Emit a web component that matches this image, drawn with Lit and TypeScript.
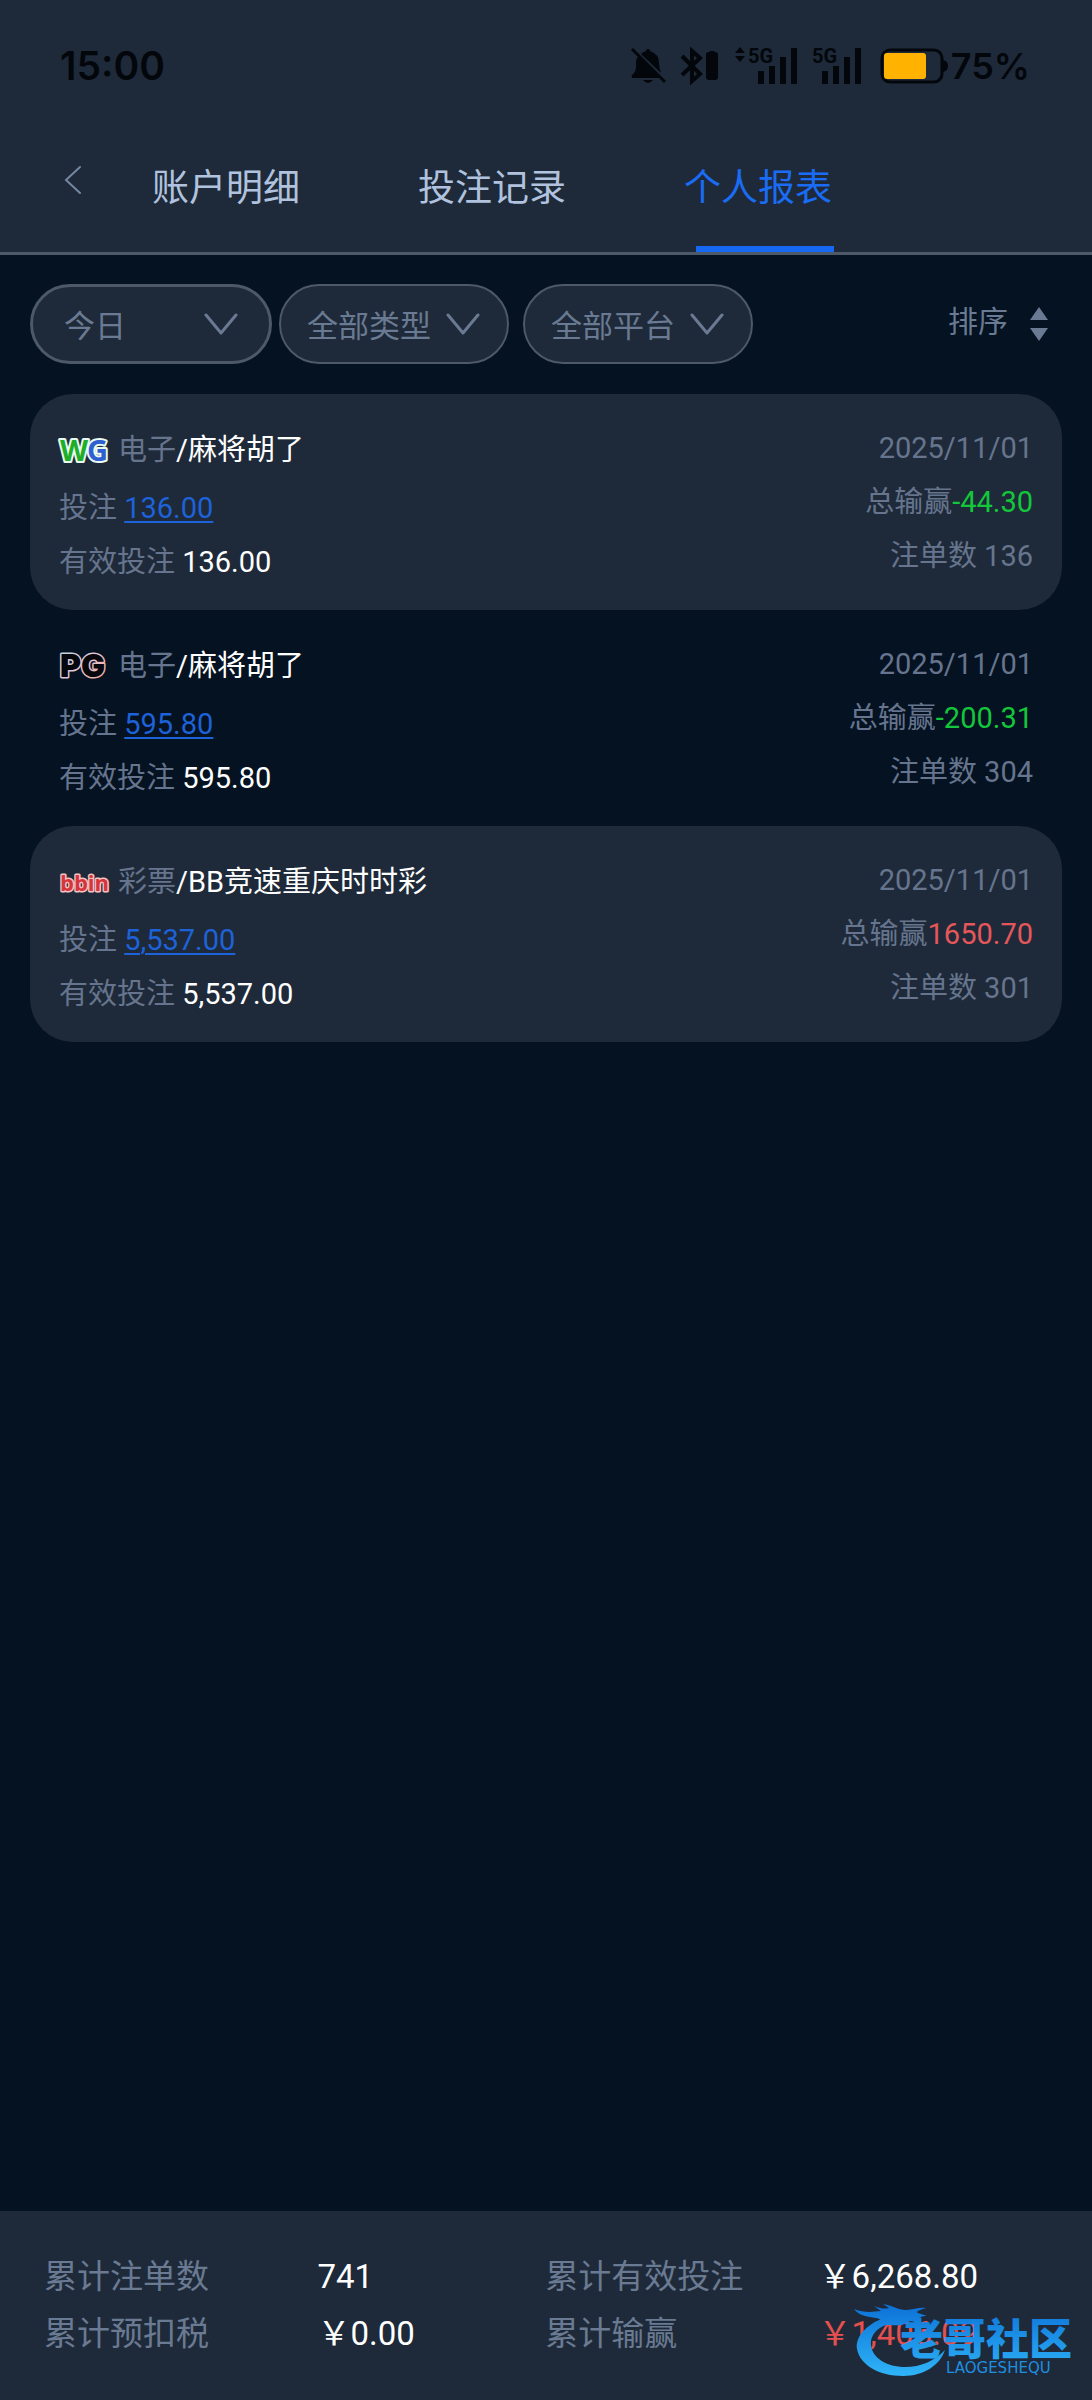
import { LitElement, html, css, svg, nothing } from "lit";
import { customElement, property, state } from "lit/decorators.js";
import { classMap } from "lit/directives/class-map.js";

type Brand = "wg" | "pg" | "bbin";

interface Report {
  brand: Brand;
  category: string;
  game: string;
  bet: string;
  validBet: string;
  date: string;
  result: string;
  count: number;
}

const REPORTS: Report[] = [
  { brand: "wg", category: "电子", game: "麻将胡了", bet: "136.00", validBet: "136.00", date: "2025/11/01", result: "-44.30", count: 136 },
  { brand: "pg", category: "电子", game: "麻将胡了", bet: "595.80", validBet: "595.80", date: "2025/11/01", result: "-200.31", count: 304 },
  { brand: "bbin", category: "彩票", game: "BB竞速重庆时时彩", bet: "5,537.00", validBet: "5,537.00", date: "2025/11/01", result: "1650.70", count: 301 },
];

const TABS = ["账户明细", "投注记录", "个人报表"];

@customElement("status-bar")
class StatusBar extends LitElement {
  static styles = css`
    :host {
      display: flex;
      align-items: center;
      justify-content: space-between;
      height: 131px;
      padding: 0 62px 0 60px;
      box-sizing: border-box;
      color: #03070c;
      font-family: Inter, Roboto, sans-serif;
      font-weight: 600;
    }
    .clock { font-size: 39px; line-height: 48px; }
    .icons { display: flex; align-items: center; }
    .bell { margin-right: 14px; }
    .bluetooth { margin-right: 17px; }
    .signal { margin-right: 14px; }
    .battery { margin: 0 3px 0 4px; }
    .percent { font-size: 36px; line-height: 48px; }
    svg { display: block; fill: currentColor; overflow: visible; }
    .net { font: 700 20px Roboto, sans-serif; }
  `;

  private bars(x: number) {
    return svg`
      <rect x=${x} y="24" width="6" height="13"></rect>
      <rect x=${x + 11} y="19" width="6" height="18"></rect>
      <rect x=${x + 22} y="10" width="6" height="27"></rect>
      <rect x=${x + 33} y="1" width="6" height="36"></rect>`;
  }

  render() {
    return html`
      <span class="clock">15:00</span>
      <div class="icons">
        <svg class="bell" width="37" height="38" viewBox="0 0 37 38" aria-hidden="true">
          <path d="M9 9 L30 31 H2 C1 29 2 28 4 26 C7 22 6 18 6 15 C6 12 7 11 9 9Z"></path>
          <path d="M11 7 Q13 5 16 4 Q16 2 18 2 Q20 2 20 4 Q29 7 29 16 Q29 20 31 26Z"></path>
          <path d="M13 33 H23 Q21 36 18 36 Q15 36 13 33Z"></path>
          <path d="M2 2 L35 35" stroke="currentColor" stroke-width="3"></path>
        </svg>
        <svg class="bluetooth" width="37" height="38" viewBox="0 0 37 38" aria-hidden="true">
          <path d="M1 9 L19 27 L11 34 V4 L19 11 L1 28" fill="none" stroke="currentColor" stroke-width="4"></path>
          <path d="M25 7 Q25 5 28 5 Q28 4 31 4 Q34 4 34 5 Q37 5 37 8 V30 Q37 33 34 33 H28 Q25 33 25 30Z"></path>
        </svg>
        <svg class="signal" width="63" height="38" viewBox="0 0 63 38" aria-hidden="true">
          <path d="M0 6 L5 0 L10 6Z M0 9 H10 L5 15Z"></path>
          <text class="net" x="13" y="16">5G</text>
          ${this.bars(23)}
        </svg>
        <svg class="signal" width="50" height="38" viewBox="0 0 50 38" aria-hidden="true">
          <text class="net" x="0" y="16">5G</text>
          ${this.bars(10)}
        </svg>
        <svg class="battery" width="68" height="36" viewBox="0 0 68 36" aria-hidden="true">
          <rect x="2" y="2" width="60" height="32" rx="8" fill="none" stroke="currentColor" stroke-width="3"></rect>
          <rect x="4" y="5" width="42" height="26" rx="3" fill="#ffb300"></rect>
          <path d="M63 12 Q68 13 68 18 Q68 23 63 24Z"></path>
        </svg>
        <span class="percent">75%</span>
      </div>
    `;
  }
}

@customElement("brand-mark")
class BrandMark extends LitElement {
  @property() brand: Brand = "wg";

  static styles = css`
    :host { display: block; width: 51px; height: 30px; }
    svg { display: block; overflow: visible; }
    text { paint-order: stroke; stroke-linejoin: round; }
    .wg { font: 700 29px "Open Sans", sans-serif; stroke: #e9fbf0; stroke-width: 4px; }
    .green { fill: #1fae2a; }
    .blue { fill: #2f5fd0; }
    .pg { font: 900 32px Inter, sans-serif; fill: #05070d; stroke-width: 3px; stroke: url(#edge); }
    .bbin { font: 700 22px "Open Sans", sans-serif; fill: #d8353b; stroke: #f3c3c4; stroke-width: 3px; }
  `;

  render() {
    return html`
      <svg width="51" height="30" viewBox="0 0 51 30" role="img" aria-label=${this.brand}>
        ${this.brand === "wg"
          ? svg`<text class="wg green" x="1" y="26">W</text><text class="wg blue" x="28" y="26">G</text>`
          : nothing}
        ${this.brand === "pg"
          ? svg`
            <defs>
              <linearGradient id="edge" x1="0" y1="0" x2="1" y2="1">
                <stop offset="0" stop-color="#b9d4e6"></stop>
                <stop offset="0.5" stop-color="#e6c4d2"></stop>
                <stop offset="1" stop-color="#f0a58a"></stop>
              </linearGradient>
            </defs>
            <text class="pg" x="1" y="26">PG</text>`
          : nothing}
        ${this.brand === "bbin" ? svg`<text class="bbin" x="1" y="24">bbin</text>` : nothing}
      </svg>
    `;
  }
}

@customElement("filter-select")
class FilterSelect extends LitElement {
  @property() label = "";
  @property({ attribute: false }) options: string[] = [];

  static styles = css`
    :host { display: grid; height: 80px; }
    select, svg { grid-area: 1 / 1; }
    select {
      appearance: none;
      width: 100%;
      height: 100%;
      box-sizing: border-box;
      margin: 0;
      padding: 4px 60px 0 var(--inset, 26px);
      border: var(--edge, 2px) solid #4d5869;
      border-radius: 40px;
      background: #1e2a39;
      color: #6a7a92;
      font: inherit;
      outline: none;
    }
    svg {
      align-self: center;
      justify-self: end;
      margin-right: calc(var(--inset, 26px) + 3px);
      pointer-events: none;
      fill: none;
      stroke: #6a7a92;
      stroke-width: 3;
      stroke-linecap: round;
      stroke-linejoin: round;
    }
  `;

  render() {
    return html`
      <select aria-label=${this.label}>
        ${this.options.map((o) => html`<option>${o}</option>`)}
      </select>
      <svg width="34" height="22" viewBox="0 0 34 22" aria-hidden="true"><path d="M2 2 L17 20 L32 2"></path></svg>
    `;
  }
}

@customElement("report-card")
class ReportCard extends LitElement {
  @property({ attribute: false }) report!: Report;

  static styles = css`
    :host {
      display: flex;
      justify-content: space-between;
      height: 216px;
      box-sizing: border-box;
      padding: 32px 29px 0;
      border-radius: 43px;
      font-size: 29px;
      color: #66758d;
    }
    .left, .right { display: flex; flex-direction: column; gap: 14px; }
    .right { padding-top: 2px; align-items: flex-end; }
    .line { line-height: 40px; white-space: nowrap; }
    .left .title { display: flex; align-items: center; gap: 8px; line-height: 48px; }
    .strong { color: #fff; }
    a { color: #1d62d8; text-underline-offset: 3px; text-decoration-thickness: 2px; }
    .win { color: #e5575a; }
    .loss { color: #14c63a; }
  `;

  render() {
    const r = this.report;
    const loss = r.result.startsWith("-");
    return html`
      <div class="left">
        <div class="line title">
          <brand-mark .brand=${r.brand}></brand-mark>
          <span>${r.category}<span class="strong">/${r.game}</span></span>
        </div>
        <div class="line">投注 <a href="#bets">${r.bet}</a></div>
        <div class="line">有效投注 <span class="strong">${r.validBet}</span></div>
      </div>
      <div class="right">
        <time class="line">${r.date}</time>
        <div class="line">总输赢<span class=${classMap({ loss, win: !loss })}>${r.result}</span></div>
        <div class="line">注单数 ${r.count}</div>
      </div>
    `;
  }
}

@customElement("community-badge")
class CommunityBadge extends LitElement {
  static styles = css`
    :host { display: block; pointer-events: none; }
    svg { display: block; overflow: visible; }
    .name { font: 900 43px "Noto Sans CJK SC", sans-serif; }
    .latin { font: 400 15px "DejaVu Sans", sans-serif; fill: #1f8fe0; }
  `;

  render() {
    return html`
      <svg width="224" height="76" viewBox="0 0 224 76" role="img" aria-label="老哥社区">
        <defs>
          <linearGradient id="sky" gradientUnits="userSpaceOnUse" x1="0" y1="0" x2="0" y2="74">
            <stop offset="0" stop-color="#0b6fd6"></stop>
            <stop offset="1" stop-color="#2fb4f7"></stop>
          </linearGradient>
        </defs>
        <g fill="url(#sky)">
          <path d="M36 14 C14 20 1 34 3 47 C6 63 25 74 49 74 C70 74 86 63 91 48 C80 59 67 65 51 65 C33 65 18 56 17 43 C16 32 25 23 42 20Z"></path>
          <path d="M0 7 C10 11 18 10 27 9 L20 4 C28 7 31 7 35 6 L29 2 C40 4 44 8 52 8 C60 8 65 5 72 6 C65 8 61 10 64 11 L73 14 C62 14 64 18 68 25 C60 19 57 18 52 21 C44 26 38 21 28 24 C32 18 25 16 16 15 C9 14 4 12 0 7Z"></path>
          <text class="name" x="46" y="53">老哥社区</text>
        </g>
        <text class="latin" x="92" y="71">LAOGESHEQU</text>
      </svg>
    `;
  }
}

@customElement("app-root")
class AppRoot extends LitElement {
  @state() private active = 2;

  static styles = css`
    :host {
      display: flex;
      flex-direction: column;
      min-height: 100vh;
      background: #041222;
      color: #6a7a92;
      font-family: Roboto, "Noto Sans CJK SC", sans-serif;
      font-weight: 400;
    }
    button { margin: 0; padding: 0; border: 0; background: none; color: inherit; font: inherit; cursor: pointer; }
    .top { background: #1e2a39; border-bottom: 3px solid #4d5869; }
    .nav { display: flex; height: 121px; padding-left: 57px; }
    .back { width: 32px; height: 97px; display: grid; place-items: center; }
    .back svg { fill: none; stroke: #7486a2; stroke-width: 2; stroke-linecap: round; }
    .tabs { display: flex; gap: 118px; margin-left: 63px; }
    .tab {
      position: relative;
      padding-bottom: 13px;
      font-size: 37px;
      color: #b0c2de;
      white-space: nowrap;
    }
    .tab.active { color: #1a6cf5; }
    .tab.active::after {
      content: "";
      position: absolute;
      left: 12px;
      right: -2px;
      bottom: 0;
      height: 6px;
      background: #1668f3;
    }
    .filters { display: flex; align-items: center; gap: 7px; padding: 29px 43px 0 30px; font-size: 31px; }
    .day { --edge: 3px; --inset: 31px; flex: 0 1 242px; }
    .kind { flex: 0 1 230px; }
    .platform { flex: 0 1 230px; margin-left: 7px; }
    .sort { display: flex; align-items: center; gap: 21px; margin-left: auto; font-size: 30px; line-height: 40px; }
    .sort span { padding-bottom: 4px; }
    .sort svg { fill: #6a7a92; }
    .list { padding: 30px 30px 0; }
    .card.filled { background: #1e2a39; }
    .totals {
      position: relative;
      display: grid;
      grid-template-columns: 12fr 10fr 12fr 12fr;
      align-content: start;
      row-gap: 9px;
      box-sizing: border-box;
      height: 189px;
      margin: auto 0 0;
      padding: 42px 0 0 44px;
      background: #1e2a39;
      font-size: 33px;
      line-height: 48px;
      white-space: nowrap;
    }
    .totals dt, .totals dd { margin: 0; }
    .totals dd { color: #fff; }
    .totals .gain { color: #e5504f; }
    .badge { position: absolute; right: 14px; bottom: 22px; }
  `;

  render() {
    return html`
      <header class="top">
        <status-bar></status-bar>
        <nav class="nav">
          <button class="back" aria-label="返回">
            <svg width="18" height="28" viewBox="0 0 18 28"><path d="M16 1 L2 14 L16 27"></path></svg>
          </button>
          <div class="tabs" role="tablist">
            ${TABS.map(
              (t, i) => html`<button
                role="tab"
                aria-selected=${i === this.active}
                class=${classMap({ tab: true, active: i === this.active })}
                @click=${() => (this.active = i)}
              >${t}</button>`
            )}
          </div>
        </nav>
      </header>
      <main>
        <div class="filters">
          <filter-select class="day" label="日期" .options=${["今日"]}></filter-select>
          <filter-select class="kind" label="类型" .options=${["全部类型"]}></filter-select>
          <filter-select class="platform" label="平台" .options=${["全部平台"]}></filter-select>
          <button class="sort">
            <span>排序</span>
            <svg width="20" height="34" viewBox="0 0 20 34" aria-hidden="true"><path d="M10 0 L19 13 H1Z M1 21 H19 L10 34Z"></path></svg>
          </button>
        </div>
        <section class="list">
          ${REPORTS.map(
            (r, i) => html`<report-card class=${classMap({ card: true, filled: i % 2 === 0 })} .report=${r}></report-card>`
          )}
        </section>
      </main>
      <dl class="totals">
        <dt>累计注单数</dt>
        <dd>741</dd>
        <dt>累计有效投注</dt>
        <dd>￥6,268.80</dd>
        <dt>累计预扣税</dt>
        <dd>￥0.00</dd>
        <dt>累计输赢</dt>
        <dd class="gain">￥1,406.09</dd>
        <community-badge class="badge"></community-badge>
      </dl>
    `;
  }
}
